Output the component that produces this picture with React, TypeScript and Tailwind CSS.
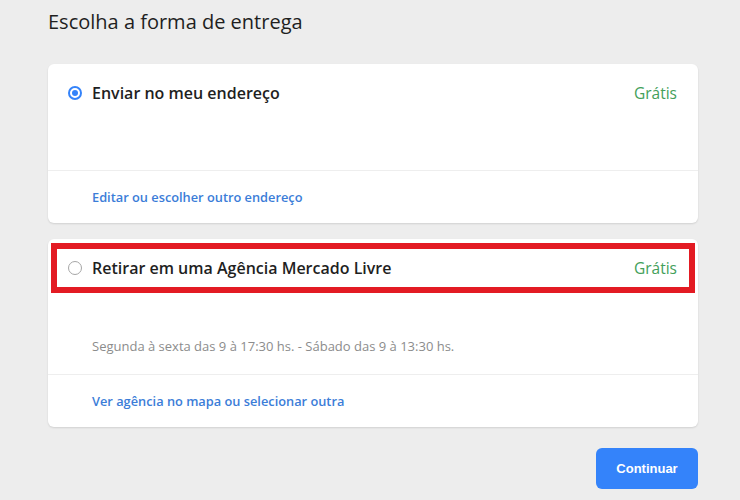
const font = { fontFamily: "'Open Sans', 'Lato', sans-serif" };

const Radio = ({ checked }: { checked: boolean }) =>
  checked ? (
    <span className="flex h-[14px] w-[14px] items-center justify-center rounded-full border-2 border-[#3483fa] bg-white">
      <span className="h-[6px] w-[6px] rounded-full bg-[#3483fa]" />
    </span>
  ) : (
    <span className="h-[14px] w-[14px] rounded-full border border-[#a6a6a6] bg-white" />
  );

interface OptionProps {
  checked: boolean;
  title: string;
  detail?: string;
  link: string;
  highlight?: boolean;
}

const Option = ({ checked, title, detail, link, highlight }: OptionProps) => (
  <div className="relative rounded-md bg-white shadow-[0_1px_2px_rgba(0,0,0,0.12)]">
    <div className={`flex pl-[20px] pr-[21px] pt-[20px] ${detail ? "h-[135px]" : "h-[106px]"}`}>
      <div className="flex flex-1 flex-col">
        <div className="flex h-[18px] items-center gap-[10px]">
          <Radio checked={checked} />
          <span className="text-[16px] leading-[18px] font-semibold text-[#1f1f1f]">{title}</span>
        </div>
        {detail && (
          <p className="mt-[61px] pl-[24px] text-[13px] leading-[16px] text-[#8c8c8c]">{detail}</p>
        )}
      </div>
      <span className="flex h-[18px] items-center text-[15.5px] leading-[18px] text-[#43a05a]">Grátis</span>
    </div>
    <div className="border-t border-[#eeeeee] px-[44px] pt-[18px] pb-[18px]">
      <a className="block text-[12.8px] leading-[16px] font-semibold text-[#3b7dd8]">{link}</a>
    </div>
    {highlight && (
      <div className="pointer-events-none absolute left-[3px] right-[3px] top-[4px] h-[50px] border-[6px] border-[#e31b23]" />
    )}
  </div>
);

export default function App() {
  return (
    <div className="h-[500px] w-[740px] bg-[#ededed] pl-[48px] pr-[42px] pt-[10px]" style={font}>
      <h1 className="text-[20px] leading-[24px] text-[#1f1f1f]">Escolha a forma de entrega</h1>
      <div className="mt-[30px] flex flex-col gap-[16px]">
        <Option checked title="Enviar no meu endereço" link="Editar ou escolher outro endereço" />
        <Option
          checked={false}
          highlight
          title="Retirar em uma Agência Mercado Livre"
          detail="Segunda à sexta das 9 à 17:30 hs. - Sábado das 9 à 13:30 hs."
          link="Ver agência no mapa ou selecionar outra"
        />
      </div>
      <div className="mt-[21px] flex justify-end">
        <button
          className="h-[41px] w-[102px] rounded-md bg-[#3483fa] text-[13px] font-bold text-white"
          style={{ fontFamily: "'Liberation Sans', Arial, sans-serif" }}
        >
          Continuar
        </button>
      </div>
    </div>
  );
}
